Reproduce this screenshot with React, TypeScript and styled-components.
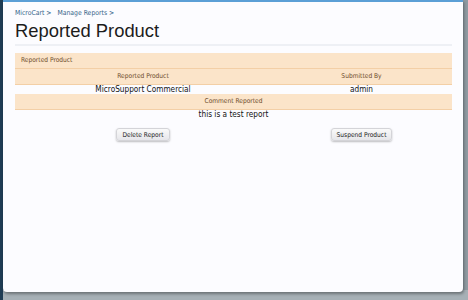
import React from "react";
import styled, { createGlobalStyle } from "styled-components";

const GlobalStyle = createGlobalStyle`
    html, body {
        margin: 0;
        padding: 0;
        height: 100%;
        overflow: hidden;
    }
    body {
        background: linear-gradient(to right, #1f3c54 0 15px, #8f9aa1 15px);
        font-family: "DejaVu Sans Condensed", "DejaVu Sans", sans-serif;
    }
`;

const Backdrop = styled.div`
    height: 300px;
    box-sizing: border-box;
    padding: 0 5px 8px 3px;
    background: linear-gradient(to right, #1f3c54 0 3px, transparent 3px),
        linear-gradient(to bottom, transparent 290px, #a6b0b6 290px);
    display: flex;
`;

const Panel = styled.div`
    flex: 1;
    background: #fcfcff;
    border-top: 2px solid #5b9fd6;
    border-radius: 0 0 4px 4px;
    box-shadow: 1px 2px 3px rgba(0, 0, 0, 0.35);
    padding: 7px 11px 0 12px;
`;

const Crumbs = styled.div`
    display: flex;
    gap: 6px;
    font-size: 6.8px;
    color: #36658a;
    height: 9px;
    line-height: 9px;
`;

const Title = styled.h1`
    margin: 2px 0 0;
    font-family: "Liberation Sans", Arial, sans-serif;
    font-weight: normal;
    font-size: 18.4px;
    color: #1c1c1c;
    line-height: 22px;
    padding-bottom: 2px;
    border-bottom: 2px solid #eef0f5;
`;

const Table = styled.div`
    margin-top: 7px;
    display: grid;
    grid-template-columns: 256px 1fr;
`;

const Head = styled.div<{ $span?: boolean; $left?: boolean }>`
    grid-column: ${p => (p.$span ? "1 / -1" : "auto")};
    background: #fbe4c9;
    border-bottom: 1px solid #f3cfa6;
    color: #6e4c2c;
    font-size: 6.6px;
    height: 15px;
    line-height: 15px;
    text-align: ${p => (p.$left ? "left" : "center")};
    padding-left: ${p => (p.$left ? "6px" : "0")};
`;

const Cell = styled.div<{ $span?: boolean }>`
    grid-column: ${p => (p.$span ? "1 / -1" : "auto")};
    text-align: center;
    font-size: 8.2px;
    color: #111;
    height: 9px;
    line-height: 9px;
`;

const Actions = styled.div`
    margin-top: 9px;
    display: grid;
    grid-template-columns: 256px 1fr;
    justify-items: center;
`;

const Button = styled.button`
    font-family: "DejaVu Sans Condensed", "DejaVu Sans", sans-serif;
    font-size: 6.6px;
    color: #222;
    height: 13px;
    padding: 0 5px;
    border: 1px solid #d4d4d8;
    border-radius: 3px;
    background: linear-gradient(#fafafa, #e6e6ea);
    box-shadow: 0 1px 2px rgba(0, 0, 0, 0.25);
`;

const App: React.FC = () => {
    return (
        <>
            <GlobalStyle />
            <Backdrop>
                <Panel>
                    <Crumbs>
                        <span>MicroCart &gt;</span>
                        <span>Manage Reports &gt;</span>
                    </Crumbs>
                    <Title>Reported Product</Title>
                    <Table>
                        <Head $span $left>Reported Product</Head>
                        <Head>Reported Product</Head>
                        <Head>Submitted By</Head>
                        <Cell>MicroSupport Commercial</Cell>
                        <Cell>admin</Cell>
                        <Head $span>Comment Reported</Head>
                        <Cell $span>this is a test report</Cell>
                    </Table>
                    <Actions>
                        <Button>Delete Report</Button>
                        <Button>Suspend Product</Button>
                    </Actions>
                </Panel>
            </Backdrop>
        </>
    );
};

export default App;
